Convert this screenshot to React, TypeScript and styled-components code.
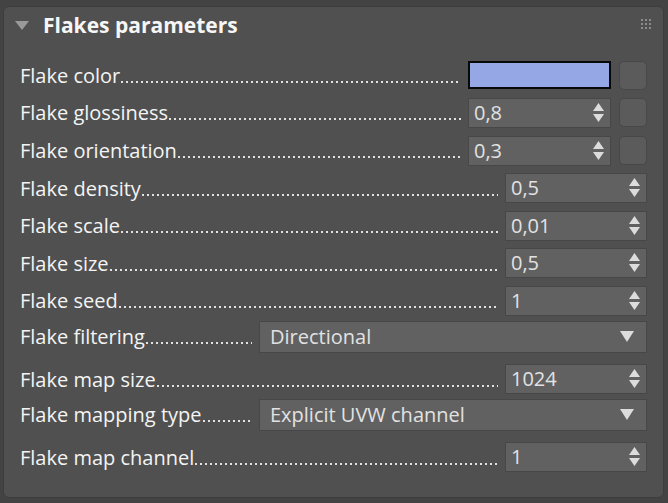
import React from 'react';
import styled, { createGlobalStyle } from 'styled-components';

const GlobalStyle = createGlobalStyle`
    html, body {
        margin: 0;
        padding: 0;
        background: #434343;
    }
    body {
        font-family: "Open Sans", "Noto Sans", sans-serif;
        -webkit-font-smoothing: antialiased;
    }
`;

const StyledPanel = styled.section`
    box-sizing: border-box;
    height: 492px;
    margin: 6px 4px 0 3px;
    background: #505050;
    border: 1px solid #3d3d3d;
    border-radius: 6px;
`;

const StyledHeader = styled.header`
    display: flex;
    align-items: center;
    height: 37px;
    padding: 0 12px 0 11px;
`;

const StyledTitle = styled.h2`
    flex: 1;
    margin: 0 0 0 14px;
    font-size: 21px;
    font-weight: 700;
    color: #f6f6f6;
    line-height: 1;
`;

const StyledGrip = styled.div`
    display: grid;
    grid-template-columns: repeat(3, 2px);
    grid-auto-rows: 2px;
    gap: 2px;
    margin-top: -3px;
    span {
        background: #8c8c8c;
    }
`;

const StyledList = styled.div`
    display: flex;
    flex-direction: column;
    padding: 12.6px 16px 0 16px;
`;

const StyledRow = styled.div<{ $height: number; $after: number }>`
    display: flex;
    align-items: center;
    height: ${p => p.$height}px;
    margin-bottom: ${p => p.$after}px;
`;

const StyledLabelCell = styled.div`
    flex: 1;
    display: flex;
    align-items: flex-end;
    min-width: 0;
`;

const StyledLabel = styled.span`
    font-size: 20px;
    line-height: 27px;
    color: #f4f4f4;
    white-space: nowrap;
`;

const StyledLeader = styled.span`
    flex: 1;
    height: 2px;
    margin: 0 7px 6px 1px;
    background-image: linear-gradient(to right, #e2e2e2 2px, transparent 2px);
    background-size: 5px 2px;
    background-repeat: repeat-x;
`;

const StyledSwatch = styled.div<{ $color: string }>`
    box-sizing: border-box;
    width: 143px;
    height: 28px;
    background: ${p => p.$color};
    border: 2px solid #080808;
`;

const StyledMapSlot = styled.div`
    box-sizing: border-box;
    width: 28px;
    height: 29px;
    margin-left: 8px;
    background: #5b5b5b;
    border: 1px solid #484848;
    border-radius: 5px;
`;

const StyledField = styled.div<{ $width: number; $height: number; $pad: number }>`
    box-sizing: border-box;
    display: flex;
    align-items: center;
    width: ${p => p.$width}px;
    height: ${p => p.$height}px;
    padding: 0 6px 0 ${p => p.$pad}px;
    background: #616161;
    border: 1px solid #474747;
    color: #e2e2e2;
    font-size: 20px;
`;

const StyledValue = styled.span`
    flex: 1;
    white-space: nowrap;
    line-height: 1;
`;

const StyledSpinArrows = styled.svg`
    display: block;
    width: 11px;
    height: 20px;
`;

const StyledDropArrow = styled.svg`
    display: block;
    width: 14px;
    height: 11px;
    margin-right: 6px;
`;

const SpinArrows = () => (
  <StyledSpinArrows viewBox="0 0 11 20">
    <path d="M5.5 0 L11 8 L0 8 Z" fill="#dcdcdc" />
    <path d="M0 11 L11 11 L5.5 19 Z" fill="#dcdcdc" />
  </StyledSpinArrows>
);

const DropArrow = () => (
  <StyledDropArrow viewBox="0 0 14 11">
    <path d="M0 0 L14 0 L7 11 Z" fill="#dcdcdc" />
  </StyledDropArrow>
);

type Param =
  | { label: string; kind: 'color'; color: string }
  | { label: string; kind: 'mapped'; value: string }
  | { label: string; kind: 'spinner'; value: string }
  | { label: string; kind: 'select'; value: string };

const params: Param[] = [
  { label: 'Flake color', kind: 'color', color: '#95a8e5' },
  { label: 'Flake glossiness', kind: 'mapped', value: '0,8' },
  { label: 'Flake orientation', kind: 'mapped', value: '0,3' },
  { label: 'Flake density', kind: 'spinner', value: '0,5' },
  { label: 'Flake scale', kind: 'spinner', value: '0,01' },
  { label: 'Flake size', kind: 'spinner', value: '0,5' },
  { label: 'Flake seed', kind: 'spinner', value: '1' },
  { label: 'Flake filtering', kind: 'select', value: 'Directional' },
  { label: 'Flake map size', kind: 'spinner', value: '1024' },
  { label: 'Flake mapping type', kind: 'select', value: 'Explicit UVW channel' },
  { label: 'Flake map channel', kind: 'spinner', value: '1' },
];

const Control = ({ param }: { param: Param }) => {
  switch (param.kind) {
    case 'color':
      return (
        <>
          <StyledSwatch $color={param.color} />
          <StyledMapSlot />
        </>
      );
    case 'mapped':
      return (
        <>
          <StyledField $width={143} $height={30} $pad={5}>
            <StyledValue>{param.value}</StyledValue>
            <SpinArrows />
          </StyledField>
          <StyledMapSlot />
        </>
      );
    case 'spinner':
      return (
        <StyledField $width={142} $height={30} $pad={5}>
          <StyledValue>{param.value}</StyledValue>
          <SpinArrows />
        </StyledField>
      );
    case 'select':
      return (
        <StyledField $width={388} $height={32} $pad={10}>
          <StyledValue>{param.value}</StyledValue>
          <DropArrow />
        </StyledField>
      );
  }
};

export default function App() {
  return (
    <>
      <GlobalStyle />
      <StyledPanel>
        <StyledHeader>
          <svg width="14" height="9" viewBox="0 0 14 9">
            <path d="M0 0 L14 0 L7 9 Z" fill="#9a9a9a" />
          </svg>
          <StyledTitle>Flakes parameters</StyledTitle>
          <StyledGrip>
            {Array.from({ length: 9 }).map((_, i) => <span key={i} />)}
          </StyledGrip>
        </StyledHeader>
        <StyledList>
          {params.map(p => (
            <StyledRow
              key={p.label}
              $height={p.kind === 'select' ? 33.5 : 37.6}
              $after={p.kind === 'select' ? 7 : 0}
            >
              <StyledLabelCell>
                <StyledLabel>{p.label}</StyledLabel>
                <StyledLeader />
              </StyledLabelCell>
              <Control param={p} />
            </StyledRow>
          ))}
        </StyledList>
      </StyledPanel>
    </>
  );
}
